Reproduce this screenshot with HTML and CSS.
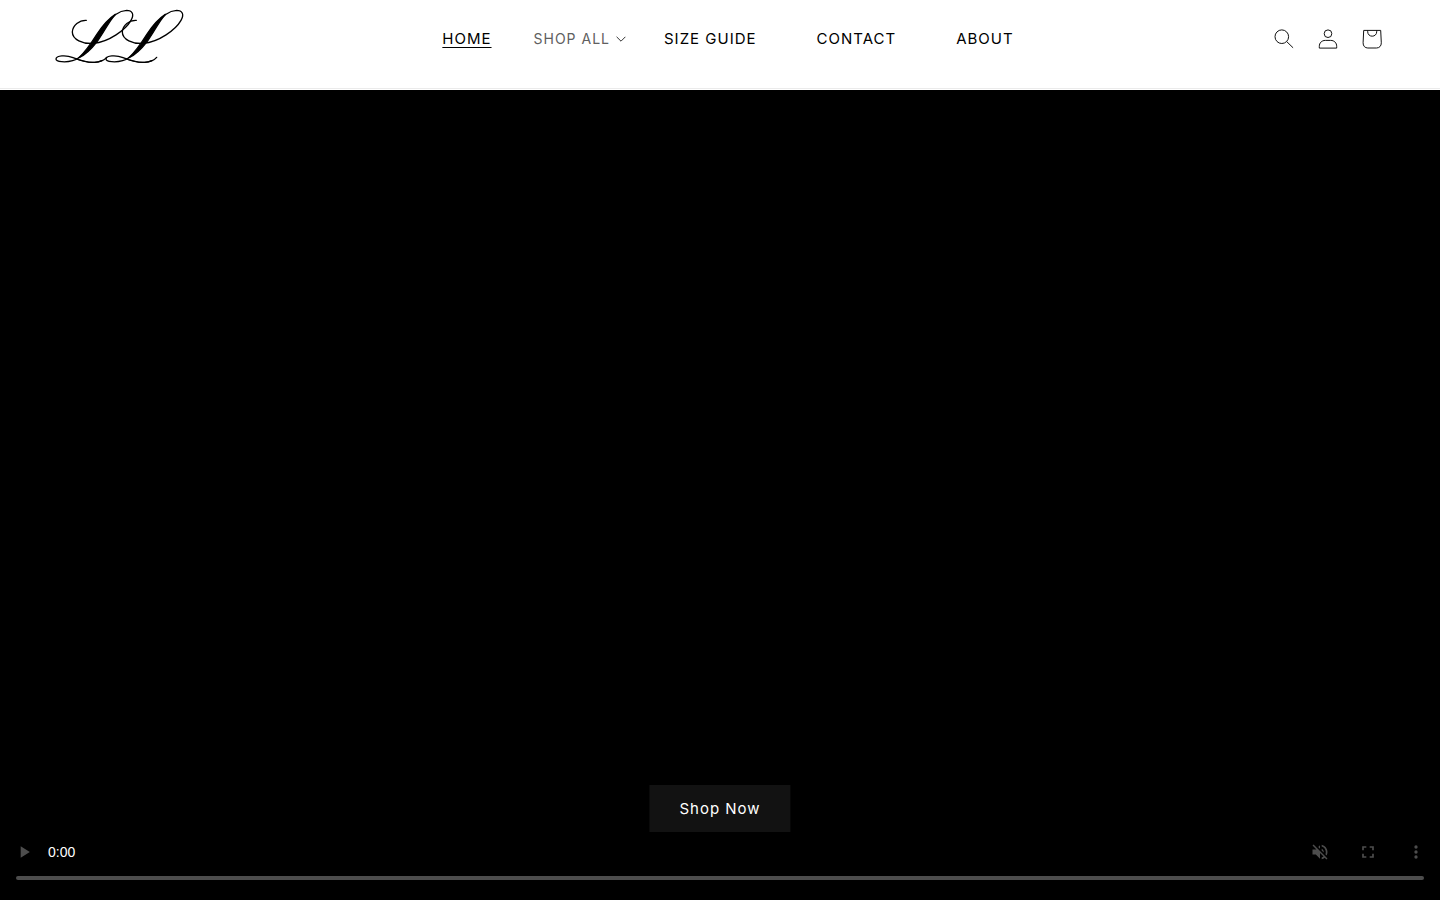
FILE: index.html
```html
<!DOCTYPE html>
<html lang="en">
<head>
    <meta charset="UTF-8">
    <meta name="viewport" content="width=device-width, initial-scale=1.0">
    <title>LL</title>
    <link rel="stylesheet" href="styles.css">
</head>
<body>
    <header class="header">
        <a class="logo" href="#" aria-label="Home page">
            <svg viewBox="30 0 432 234" aria-hidden="true">
                <defs>
                    <g id="flourish">
                        <path class="hairline" d="M139 61C118 60 98 76 97 96C97 119 128 132 160 130C207 126 257 89 273 61C284 42 276 31 260 31C235 32 214 51 197 77"/>
                        <path class="hairline" d="M146 145C132 162 119 176 98 182C77 188 48 186 48 177C49 167 77 164 99 173C122 182 145 189 164 187C181 186 193 180 200 172"/>
                        <path class="hairline" d="M110 177C128 184 146 188 164 187C172 187 179 185 185 182"/>
                        <path class="stem" d="M226 43C206 56 187 78 171 102C154 129 140 151 116 174C136 165 155 146 172 124C194 93 206 66 226 43Z"/>
                    </g>
                </defs>
                <use href="#flourish"/>
                <use href="#flourish" x="150"/>
            </svg>
        </a>

        <nav class="nav">
            <a class="nav-link active" href="#">HOME</a>
            <button class="nav-menu" type="button">SHOP ALL
                <svg viewBox="0 0 10 6" aria-hidden="true"><path d="M.6.8L5 5.2 9.4.8"/></svg>
            </button>
            <a class="nav-link" href="#">SIZE GUIDE</a>
            <a class="nav-link" href="#">CONTACT</a>
            <a class="nav-link" href="#">ABOUT</a>
        </nav>

        <div class="icons">
            <button class="icon-btn" type="button" aria-label="Search">
                <svg viewBox="0 0 20 20"><circle cx="7.8" cy="7.7" r="6.8"/><path d="M12.7 12.6l6.4 6.2"/></svg>
            </button>
            <a class="icon-btn" href="#" aria-label="Log in">
                <svg viewBox="0 0 20 20"><circle cx="10" cy="4.7" r="3.8"/><path d="M1.3 19.1v-1.7c0-3.5 2.4-6 6-6h5.4c3.6 0 6 2.5 6 6v1.7z"/></svg>
            </a>
            <a class="icon-btn" href="#" aria-label="Cart">
                <svg viewBox="0 0 20 20"><path d="M1.7 1.4h17l.6 12.4c.1 3.2-2 5.2-4.8 5.2H5.8C3 19 1 17 1.1 13.8z"/><path d="M5.7 1.4v1.4c0 2.6 2 4.4 4.5 4.4s4.5-1.8 4.5-4.4V1.4"/></svg>
            </a>
        </div>
    </header>

    <main class="hero">
        <video class="hero-video" controls muted></video>
        <a class="shop-btn" href="#">Shop Now</a>
    </main>
</body>
</html>
```

FILE: styles.css
```css
* {
    box-sizing: border-box;
}
body {
    margin: 0;
    background: white;
    color: #121212;
    font-family: Inter, sans-serif;
    font-size: 15px;
}
.header {
    display: flex;
    justify-content: space-between;
    align-items: center;
    padding: 0 46px 10px 50px;
    margin-bottom: 1px;
    border-bottom: 1px solid #ebebeb;
}
.logo svg {
    display: block;
    width: 144px;
    height: 78px;
}
.hairline {
    fill: none;
    stroke: black;
    stroke-width: 4;
    stroke-linecap: round;
}
.stem {
    fill: black;
    stroke: black;
    stroke-width: 4;
    stroke-linejoin: round;
}
.nav {
    display: flex;
    align-items: center;
}
.nav-link {
    padding: 0 30px;
    color: black;
    letter-spacing: 1px;
    line-height: 20px;
    text-decoration: none;
}
.active {
    text-decoration: underline;
    text-underline-offset: 3px;
}
.nav-menu {
    display: flex;
    align-items: center;
    gap: 6px;
    padding: 0 8px 0 12px;
    border: 0;
    background: none;
    color: #606060;
    font-family: inherit;
    font-size: 14px;
    letter-spacing: 1px;
    line-height: 20px;
    cursor: pointer;
}
.nav-menu svg {
    width: 10px;
    height: 6px;
    fill: none;
    stroke: #333;
}
.icons {
    display: flex;
}
.icon-btn {
    display: flex;
    align-items: center;
    justify-content: center;
    width: 44px;
    height: 44px;
    padding: 0;
    border: 0;
    background: none;
    cursor: pointer;
}
.icon-btn svg {
    width: 20px;
    height: 20px;
    fill: none;
    stroke: #121212;
}
.hero {
    position: relative;
    background: black;
}
.hero-video {
    display: block;
    width: 100%;
    aspect-ratio: 16 / 9;
    background: black;
}
.hero-video::-webkit-media-controls {
    background: black !important;
}
.hero-video::-webkit-media-controls-current-time-display {
    font-family: "Liberation Sans", Arial, sans-serif;
}
.shop-btn {
    position: absolute;
    bottom: 68px;
    left: 50%;
    transform: translateX(-50%);
    padding: 0 30px;
    background: #121212;
    color: white;
    letter-spacing: 1px;
    line-height: 47px;
    text-decoration: none;
}
```
